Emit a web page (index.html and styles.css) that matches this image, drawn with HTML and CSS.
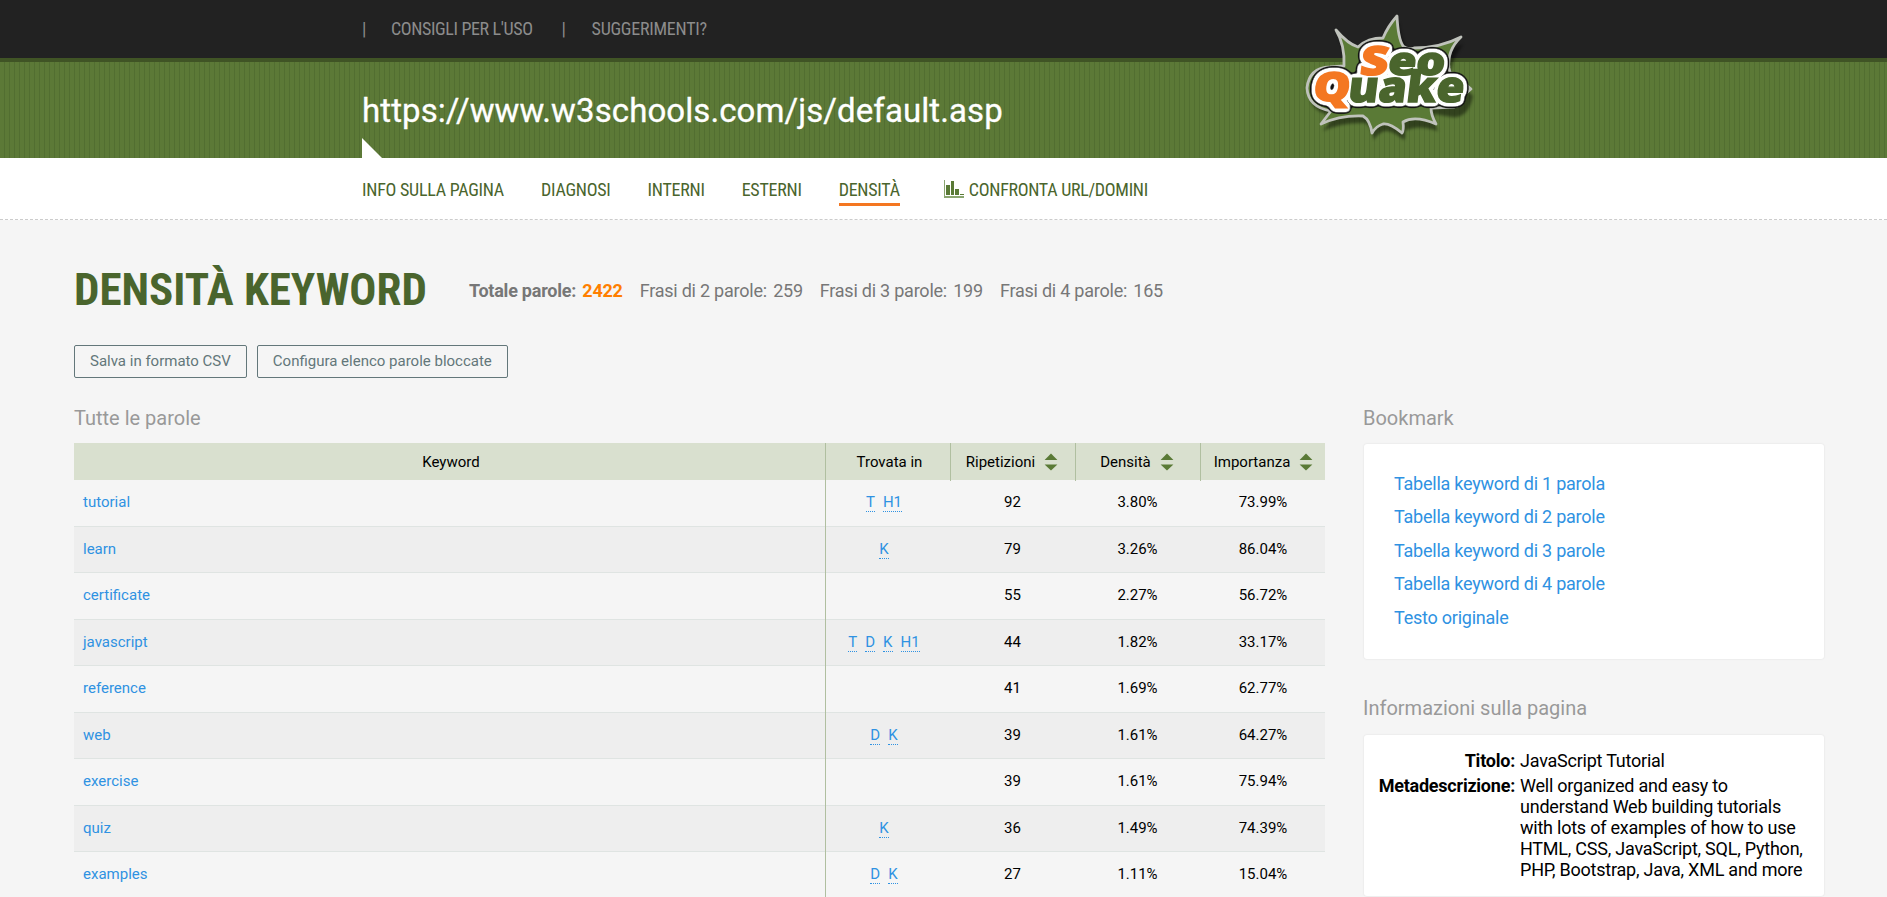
FILE: index.html
```html
<!DOCTYPE html>
<html lang="it">
<head>
<meta charset="utf-8">
<title>SEOquake – Densità keyword</title>
<link rel="stylesheet" href="styles.css">
</head>
<body>
<svg class="defs" width="0" height="0" aria-hidden="true">
  <symbol id="sort" viewBox="0 0 14 20"><path d="M7 1.5 13.4 8H.6z"/><path d="M7 18.5 13.4 12.4H.6z"/></symbol>
</svg>
<header class="header">
  <div class="topbar">
    <div class="inner topbar-inner">
      <span class="sep">|</span><a class="toplink toplink-a">CONSIGLI PER L'USO</a>
      <span class="sep">|</span><a class="toplink toplink-b">SUGGERIMENTI?</a>
    </div>
  </div>
  <div class="banner">
    <div class="inner"><h2 class="url">https://www.w3schools.com/js/default.asp</h2></div>
    <i class="pointer"></i>
    <svg class="logo" viewBox="0 0 200 160" width="200" height="160">
      <defs>
        <filter id="outline" x="-15%" y="-25%" width="130%" height="150%" color-interpolation-filters="sRGB">
          <feGaussianBlur in="SourceAlpha" stdDeviation="2.2" result="soft"/>
          <feComponentTransfer in="soft" result="wide"><feFuncA type="linear" slope="9" intercept="-0.5"/></feComponentTransfer>
          <feMorphology in="wide" operator="dilate" radius="1" result="whiteShape"/>
          <feGaussianBlur in="whiteShape" stdDeviation="1.8" result="soft2"/>
          <feComponentTransfer in="soft2" result="blackShape"><feFuncA type="linear" slope="6" intercept="-0.4"/></feComponentTransfer>
          <feFlood flood-color="#fff"/><feComposite in2="whiteShape" operator="in" result="white"/>
          <feFlood flood-color="#111"/><feComposite in2="blackShape" operator="in" result="black"/>
          <feMerge><feMergeNode in="black"/><feMergeNode in="white"/><feMergeNode in="SourceGraphic"/></feMerge>
        </filter>
      </defs>
      <path class="logo-shadow" transform="translate(2 7)" d="M107 16Q110 40 121 47Q145 50 171 37Q158 55 158 72Q172 80 181 89Q176 112 160 110L142 107Q142 115 146 124Q125 117 113 124Q114 130 112 133Q100 123 93 124Q86 126 82 133Q80 120 73 116Q50 115 31 124L42 109Q18 105 18 88Q20 70 40 68L54 66Q55 45 46 30Q60 40 70 48Q85 38 93 38Q98 26 107 16Z"/>
      <path class="logo-burst" d="M107 16Q108 38 113 46Q118 50 124 48Q150 48 171 37Q157 50 159 68L160 73Q170 73 174 83L181 89L175 94Q172 106 164 107L141 108Q141 115 146 124Q125 115 113 122Q114 130 112 133Q100 123 93 124Q86 126 82 133Q80 120 73 116Q50 115 31 124L41 111Q18 107 17 88Q19 68 40 67L54 66Q55 45 46 30Q58 44 68 47Q78 38 93 38Q98 26 107 16Z"/>
      <g class="logo-word" filter="url(#outline)">
        <text class="orange" transform="translate(69 75) skewX(-7)" font-size="40" textLength="28" lengthAdjust="spacingAndGlyphs">S</text>
        <text transform="translate(97 75) skewX(-7)" font-size="39" textLength="57" lengthAdjust="spacingAndGlyphs">eo</text>
        <text class="orange" transform="translate(22 101) skewX(-7)" font-size="40" textLength="37" lengthAdjust="spacingAndGlyphs">Q</text>
        <text transform="translate(57 102) skewX(-7)" font-size="43" textLength="116" lengthAdjust="spacingAndGlyphs">uake</text>
      </g>
    </svg>
  </div>
  <nav class="nav">
    <div class="inner nav-inner">
      <a>INFO SULLA PAGINA</a><a>DIAGNOSI</a><a>INTERNI</a><a>ESTERNI</a><a class="active">DENSITÀ</a>
      <a class="compare"><svg width="20" height="19" viewBox="0 0 20 19"><path d="M0 0h1v16h19v2H0z" fill="#8aa570"/><path d="M2 5h4v10H2zM7 1h3v14H7zM11 9h4v6h-4zM16 14h4v1h-4z"/></svg>CONFRONTA URL/DOMINI</a>
    </div>
  </nav>
</header>
<main class="page">
  <div class="heading">
    <h1>DENSITÀ KEYWORD</h1>
    <div class="totals"><b>Totale parole: <em>2422</em></b><span>Frasi di 2 parole: <i>259</i></span><span>Frasi di 3 parole: <i>199</i></span><span>Frasi di 4 parole: <i>165</i></span></div>
  </div>
  <div class="actions"><button class="btn">Salva in formato CSV</button><button class="btn">Configura elenco parole bloccate</button></div>
  <div class="columns">
    <section class="main-col">
      <h3>Tutte le parole</h3>
      <div class="table">
        <div class="row head"><div>Keyword</div><div>Trovata in</div><div class="sortable">Ripetizioni<svg><use href="#sort"/></svg></div><div class="sortable">Densità<svg><use href="#sort"/></svg></div><div class="sortable">Importanza<svg><use href="#sort"/></svg></div></div>
        <div class="row"><a>tutorial</a><div class="found"><abbr>T</abbr><abbr>H1</abbr></div><div>92</div><div>3.80%</div><div>73.99%</div></div>
        <div class="row"><a>learn</a><div class="found"><abbr>K</abbr></div><div>79</div><div>3.26%</div><div>86.04%</div></div>
        <div class="row"><a>certificate</a><div class="found"></div><div>55</div><div>2.27%</div><div>56.72%</div></div>
        <div class="row"><a>javascript</a><div class="found"><abbr>T</abbr><abbr>D</abbr><abbr>K</abbr><abbr>H1</abbr></div><div>44</div><div>1.82%</div><div>33.17%</div></div>
        <div class="row"><a>reference</a><div class="found"></div><div>41</div><div>1.69%</div><div>62.77%</div></div>
        <div class="row"><a>web</a><div class="found"><abbr>D</abbr><abbr>K</abbr></div><div>39</div><div>1.61%</div><div>64.27%</div></div>
        <div class="row"><a>exercise</a><div class="found"></div><div>39</div><div>1.61%</div><div>75.94%</div></div>
        <div class="row"><a>quiz</a><div class="found"><abbr>K</abbr></div><div>36</div><div>1.49%</div><div>74.39%</div></div>
        <div class="row"><a>examples</a><div class="found"><abbr>D</abbr><abbr>K</abbr></div><div>27</div><div>1.11%</div><div>15.04%</div></div>
      </div>
    </section>
    <aside class="side-col">
      <h3>Bookmark</h3>
      <div class="card links"><a>Tabella keyword di 1 parola</a><a>Tabella keyword di 2 parole</a><a>Tabella keyword di 3 parole</a><a>Tabella keyword di 4 parole</a><a>Testo originale</a></div>
      <h3>Informazioni sulla pagina</h3>
      <dl class="card info">
        <dt>Titolo:</dt><dd>JavaScript Tutorial</dd>
        <dt>Metadescrizione:</dt><dd>Well organized and easy to understand Web building tutorials with lots of examples of how to use HTML, CSS, JavaScript, SQL, Python, PHP, Bootstrap, Java, XML and more</dd>
      </dl>
    </aside>
  </div>
</main>
</body>
</html>
```
FILE: styles.css
```css
* { box-sizing: border-box; }
body { margin: 0; height: 897px; overflow: hidden; background: #f5f5f5; font-family: Roboto, "Liberation Sans", sans-serif; color: #000; }
h1, h2, h3, dl, dd { margin: 0; font-weight: 400; }
.defs { position: absolute; }
.inner { padding-left: 362px; }

.topbar { height: 58px; background: #222; }
.topbar-inner, .nav, .nav-inner, .toplink { font-family: "Roboto Condensed", Roboto, sans-serif; font-stretch: 75%; }
.topbar-inner { display: flex; font-size: 18px; line-height: 58px; color: #8c8c8c; }
.sep { width: 4px; text-align: center; }
.toplink-a { margin: 0 29px 0 25px; letter-spacing: -0.38px; }
.toplink-b { margin-left: 26px; letter-spacing: -0.26px; }

.banner { position: relative; height: 100px; border-top: 4px solid #405425; background: repeating-linear-gradient(90deg, #5c7937 0 4px, #526e31 4px 5px); }
.url { padding-top: 30px; font-size: 33px; line-height: 38px; letter-spacing: 0.09px; color: #fff; -webkit-text-stroke: 0.3px #fff; }
.pointer { position: absolute; left: 362px; bottom: 0; border-left: 20px solid #fff; border-top: 20px solid transparent; }
.logo { position: absolute; left: 1290px; top: -62px; overflow: visible; }
.logo-shadow { fill: rgba(0, 0, 0, .45); filter: blur(1.5px); }
.logo-burst { fill: #5a7a36; stroke: #bfc2bb; stroke-width: 2.8; stroke-linejoin: round; }
.logo-word { font-family: "Open Sans", sans-serif; font-weight: 800; fill: #4a652d; stroke: #4a652d; stroke-width: 1.4; }
.logo-word .orange { fill: #f47721; stroke: #f47721; }

.nav { height: 62px; background: #fff; border-bottom: 1px dashed #ccc; }
.nav-inner { display: flex; gap: 37px; padding-top: 18px; font-size: 18px; line-height: 27px; letter-spacing: -0.26px; color: #4a652d; }
.nav-inner a { height: 30px; white-space: nowrap; }
.nav-inner .active { border-bottom: 3px solid #f47721; }
.nav-inner .compare { display: flex; gap: 5px; align-items: center; margin-left: 7px; height: 27px; letter-spacing: -0.3px; }
.compare svg { fill: #5a7a36; }

.page { padding: 44px 63px 0 74px; }
.heading { display: flex; align-items: center; height: 52px; }
.heading h1 { width: 395px; font: bold 45px/52px "Roboto Condensed", Roboto, sans-serif; font-stretch: 75%; color: #4a652d; white-space: nowrap; }
.totals { display: flex; gap: 17px; font-size: 18px; letter-spacing: -0.23px; color: #777; white-space: nowrap; }
.totals em, .totals i { margin-left: 2px; font-style: normal; }
.totals em { color: #ff7f00; }
.actions { display: flex; gap: 10px; margin-top: 29px; }
.btn { height: 33px; padding: 0 15px 2px; font: 15px Roboto, sans-serif; color: #63777a; background: none; border: 1px solid #63777a; border-radius: 2px; }

.columns { display: flex; justify-content: space-between; margin-top: 28px; }
.main-col { width: 1251px; }
.side-col { width: 461px; }
h3 { font-size: 20px; line-height: 24px; color: #999; }
.table { margin-top: 13px; font-size: 15px; }
.row { display: grid; grid-template-columns: 752px 125px 125px 125px 124px; height: 46.5px; border-bottom: 1px solid #dfe4e2; line-height: 45px; text-align: center; }
.row:nth-child(odd) { background: #eee; }
.row > a { padding-left: 9px; text-align: left; color: #2f92e2; }
.row > :first-child { border-right: 1px solid #b0bfa0; margin-bottom: -1px; }
.row > div:nth-child(n+3) { padding-right: 2px; }
.row > div:last-child { padding-right: 0; }
.row.head { height: 37px; border: 0; background: #d9e0cf; line-height: 38px; }
.head > div + div:not(:last-child) { border-right: 1px solid #b0bfa0; }
.head > div:nth-child(-n+2) { padding-left: 3px; }
.head > .sortable { display: flex; justify-content: center; align-items: center; gap: 9px; padding-right: 0; }
.head > .sortable:last-child { padding-left: 1px; }
.sortable svg { width: 14px; height: 20px; fill: #5a7a36; }
.found { display: flex; justify-content: center; align-items: center; gap: 8px; padding-right: 9px; color: #2f92e2; }
.found abbr { line-height: 18px; border-bottom: 1px dotted #2f92e2; }

.card { margin: 14px 0 37px 1px; background: #fff; border-radius: 3px; font-size: 18px; letter-spacing: -0.23px; box-shadow: 0 0 2px #ddd; }
.links { display: flex; flex-direction: column; height: 215px; padding: 23px 30px; line-height: 33.4px; color: #2f92e2; }
.info { display: grid; grid-template-columns: 151px 1fr; column-gap: 5px; row-gap: 4px; align-content: start; height: 161px; margin-top: 15px; padding: 15px 16px 0 0; line-height: 21px; }
.info dt { font-weight: 700; text-align: right; }
```
